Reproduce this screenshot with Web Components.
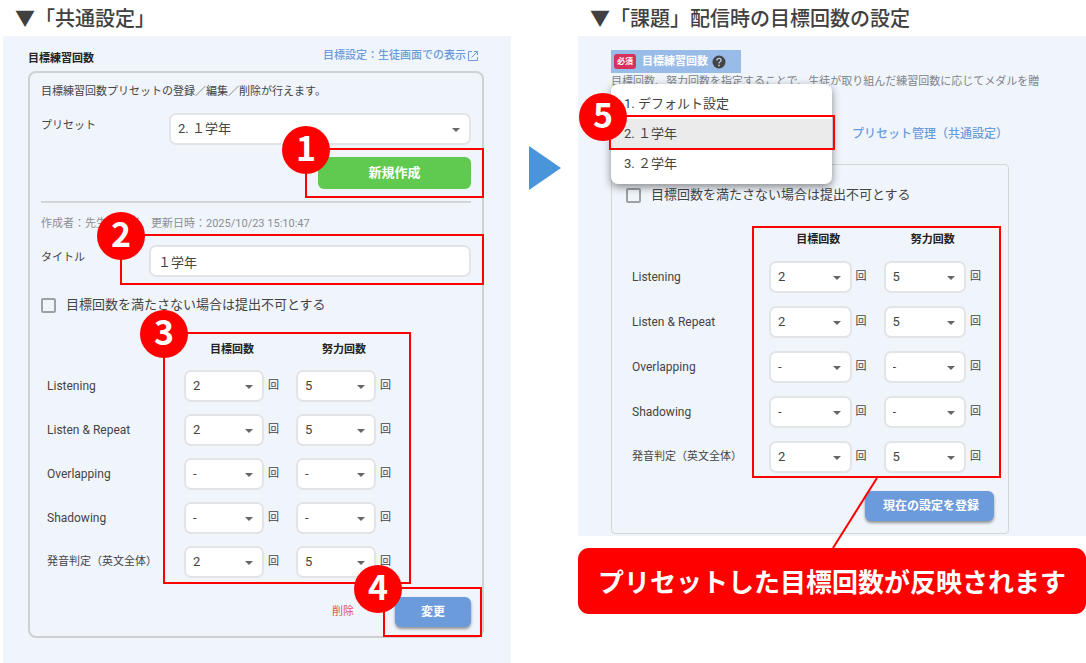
<!DOCTYPE html>
<html lang="ja">
<head>
<meta charset="utf-8">
<title>目標回数の設定</title>
<style>
  body {
    margin: 0;
    background: #fff;
    color: #444;
    font-family: Roboto, "Noto Sans CJK JP", sans-serif;
    font-size: 11px;
    line-height: 16px;
  }
  main {
    display: grid;
    grid-template-columns: minmax(0, 1fr) 67px minmax(0, 1fr);
    padding-left: 3px;
  }
</style>
</head>
<body>
<main>
  <guide-column heading="▼「共通設定」">
    <common-settings></common-settings>
  </guide-column>
  <step-arrow></step-arrow>
  <guide-column heading="▼「課題」配信時の目標回数の設定">
    <task-settings></task-settings>
    <call-out slot="after">プリセットした目標回数が反映されます</call-out>
  </guide-column>
</main>

<script>
// heading above a pale blue panel
class GuideColumn extends HTMLElement {
  connectedCallback() {
    this.attachShadow({ mode: "open" });
    this.shadowRoot.innerHTML = `
      <style>
        :host { display: block; min-width: 0; }
        h1 {
          margin: 0;
          padding: 0 12px;
          font: 500 20px/36px "Noto Sans CJK JP", sans-serif;
          color: #404040;
          white-space: nowrap;
        }
        section { background: #f0f5fc; }
      </style>
      <h1>${this.getAttribute("heading")}</h1>
      <section><slot></slot></section>
      <slot name="after"></slot>
    `;
  }
}
customElements.define("guide-column", GuideColumn);

class StepArrow extends HTMLElement {
  connectedCallback() {
    this.attachShadow({ mode: "open" });
    this.shadowRoot.innerHTML = `
      <style>
        :host { display: flex; justify-content: center; padding-top: 146px; }
        svg { display: block; }
      </style>
      <svg width="32" height="44" viewBox="0 0 32 44" aria-hidden="true">
        <path d="M0 0L32 22L0 44Z" fill="#4a95da"/>
      </svg>
    `;
  }
}
customElements.define("step-arrow", StepArrow);

// red frame laid over its content, with an optional step number
class MarkFrame extends HTMLElement {
  connectedCallback() {
    const num = this.getAttribute("num");
    this.attachShadow({ mode: "open" });
    this.shadowRoot.innerHTML = `
      <style>
        :host { display: block; position: relative; }
        .frame {
          position: absolute;
          inset: var(--inset, -9px -13px);
          border: 2px solid #fe0000;
          pointer-events: none;
          z-index: 5;
        }
        .num {
          position: absolute;
          left: var(--num-x, 0);
          top: 0;
          width: 48px;
          height: 48px;
          margin: -24px -25px;
          border-radius: 50%;
          background: #fe0000;
          color: #fff;
          font: 700 34px/42px "Noto Sans CJK JP", sans-serif;
          text-align: center;
        }
      </style>
      <slot></slot>
      <div class="frame">${num ? `<span class="num">${num}</span>` : ""}</div>
    `;
  }
}
customElements.define("mark-frame", MarkFrame);

class SelectBox extends HTMLElement {
  connectedCallback() {
    const value = this.getAttribute("value");
    const options = (this.getAttribute("options") || value).split("|");
    this.attachShadow({ mode: "open" });
    this.shadowRoot.innerHTML = `
      <style>
        :host { display: block; position: relative; }
        select {
          display: block;
          width: 100%;
          height: 32px;
          box-sizing: border-box;
          padding: 0 24px 0 7px;
          border: 2px solid #e2e4e8;
          border-radius: 7px;
          background: #fff;
          color: #444;
          font: inherit;
          font-size: 13px;
          appearance: none;
        }
        svg { position: absolute; right: 11px; top: 15px; pointer-events: none; }
      </style>
      <select aria-label="${this.getAttribute("label")}">
        ${options.map(o => `<option${o === value ? " selected" : ""}>${o}</option>`).join("")}
      </select>
      <svg width="8" height="4" viewBox="0 0 8 4" aria-hidden="true"><path d="M0 0H8L4 4Z" fill="#666"/></svg>
    `;
  }
}
customElements.define("select-box", SelectBox);

class CheckLine extends HTMLElement {
  connectedCallback() {
    this.attachShadow({ mode: "open" });
    this.shadowRoot.innerHTML = `
      <style>
        :host { display: block; }
        label {
          display: flex;
          align-items: center;
          gap: 10px;
          font-size: 13px;
          line-height: 20px;
          white-space: nowrap;
        }
        input {
          width: 15px;
          height: 15px;
          margin: 0;
          box-sizing: border-box;
          border: 2px solid #9da0a5;
          border-radius: 2px;
          appearance: none;
        }
        input:checked { background: #6c9bdb; }
      </style>
      <label><input type="checkbox"><slot></slot></label>
    `;
  }
}
customElements.define("check-line", CheckLine);

class ActionButton extends HTMLElement {
  connectedCallback() {
    this.attachShadow({ mode: "open" });
    this.shadowRoot.innerHTML = `
      <style>
        :host { display: block; }
        button {
          display: block;
          width: 100%;
          height: 30px;
          padding: 0 18px;
          border: 0;
          border-radius: 6px;
          background: #6c9bdb;
          box-shadow: 0 2px 3px rgba(0, 0, 0, 0.4);
          color: #fff;
          font: inherit;
          font-size: 12px;
          font-weight: 700;
          white-space: nowrap;
        }
        :host([kind="create"]) button {
          height: 32px;
          background: #60ca50;
          box-shadow: none;
          font-size: 13px;
        }
        :host([kind="danger"]) button {
          padding: 0;
          background: none;
          box-shadow: none;
          color: #e5525a;
          font-size: 11px;
          font-weight: 400;
        }
      </style>
      <button type="button"><slot></slot></button>
    `;
  }
}
customElements.define("action-button", ActionButton);

class CountTable extends HTMLElement {
  connectedCallback() {
    const rows = [
      ["Listening", "2", "5"],
      ["Listen &amp; Repeat", "2", "5"],
      ["Overlapping", "-", "-"],
      ["Shadowing", "-", "-"],
      ["発音判定（英文全体）", "2", "5"],
    ];
    const cell = (name, value) => `
      <td><div class="count">
        <select-box label="${name}" value="${value}" options="-|1|2|3|4|5"></select-box>回
      </div></td>`;
    this.attachShadow({ mode: "open" });
    this.shadowRoot.innerHTML = `
      <style>
        :host { display: block; }
        table { border-collapse: collapse; table-layout: fixed; width: 100%; }
        col.name { width: var(--name-width, 143px); }
        th, td { padding: 0; }
        thead th {
          height: var(--head-height, 23px);
          padding-right: 16px;
          vertical-align: top;
          color: #222;
          font-weight: 700;
          line-height: 18px;
        }
        tbody tr { height: var(--row-height, 44px); }
        tbody th {
          padding-left: 6px;
          font-size: 12px;
          font-weight: 400;
          text-align: left;
          white-space: nowrap;
        }
        tbody tr:last-child th { font-size: 11px; }
        .count { display: flex; align-items: center; gap: 4px; padding-right: 17px; }
        select-box { flex: 1; }
      </style>
      <table>
        <colgroup><col class="name"><col><col></colgroup>
        <thead><tr><td></td><th>目標回数</th><th>努力回数</th></tr></thead>
        <tbody>
          ${rows.map(([name, goal, effort]) => `
            <tr><th scope="row">${name}</th>${cell(name + " 目標回数", goal)}${cell(name + " 努力回数", effort)}</tr>
          `).join("")}
        </tbody>
      </table>
    `;
  }
}
customElements.define("count-table", CountTable);

class CommonSettings extends HTMLElement {
  connectedCallback() {
    this.attachShadow({ mode: "open" });
    this.shadowRoot.innerHTML = `
      <style>
        :host { display: block; padding: 12px 27px 25px 25px; }
        header { display: flex; justify-content: space-between; padding: 0 6px 4px 0; }
        h2 { margin: 3px 0 0; font-size: 11px; line-height: 16px; color: #222; }
        a { display: flex; align-items: center; gap: 2px; height: 16px; color: #6c9bdb; font-weight: 500; text-decoration: none; }
        .card {
          padding: 10px 11px 9px;
          border: 2px solid #cdd0d5;
          border-radius: 8px;
        }
        p { margin: 0; line-height: 18px; white-space: nowrap; }
        .row { display: flex; justify-content: space-between; margin-top: 12px; }
        .row > label, .row > span { line-height: 26px; }
        .preset { width: 302px; }
        .create { width: 153px; margin: 12px 0 0 auto; }
        hr { margin: 12px 0; border: 0; border-top: 2px solid #d2d5da; }
        .meta { color: #8b8e93; }
        .title { width: 322px; --inset: -11px -13px -8px -29px; }
        input {
          display: block;
          width: 100%;
          height: 32px;
          box-sizing: border-box;
          padding: 0 7px;
          border: 2px solid #e2e4e8;
          border-radius: 7px;
          background: #fff;
          color: #444;
          font: inherit;
          font-size: 13px;
        }
        check-line { margin-top: 18px; }
        .counts { width: 367px; margin-top: 26px; --inset: -9px -3px 0 122px; }
        footer { display: flex; justify-content: flex-end; gap: 41px; margin-top: 13px; }
        .save { width: 76px; --inset: -10px -11px -10px -12px; --num-x: -6px; }
      </style>
      <header>
        <h2>目標練習回数</h2>
        <a href="#">目標設定：生徒画面での表示
          <svg width="10" height="10" viewBox="0 0 10 10" fill="none" stroke="#6c9bdb" aria-hidden="true">
            <path d="M4 .5H.5V9.5H9.5V6M6 .5H9.5V4M9.5 .5L3.5 6.5"/>
          </svg>
        </a>
      </header>
      <div class="card">
        <p>目標練習回数プリセットの登録／編集／削除が行えます。</p>
        <div class="row">
          <span>プリセット</span>
          <select-box class="preset" label="プリセット" value="2. １学年" options="1. デフォルト設定|2. １学年|3. ２学年"></select-box>
        </div>
        <mark-frame class="create" num="1"><action-button kind="create">新規作成</action-button></mark-frame>
        <hr>
        <p class="meta">作成者：先生管理者、更新日時：2025/10/23 15:10:47</p>
        <div class="row">
          <label for="title">タイトル</label>
          <mark-frame class="title" num="2"><input id="title" value="１学年"></mark-frame>
        </div>
        <check-line>目標回数を満たさない場合は提出不可とする</check-line>
        <mark-frame class="counts" num="3"><count-table></count-table></mark-frame>
        <footer>
          <action-button kind="danger">削除</action-button>
          <mark-frame class="save" num="4"><action-button>変更</action-button></mark-frame>
        </footer>
      </div>
    `;
  }
}
customElements.define("common-settings", CommonSettings);

// opened preset list, lies over the row it belongs to
class PresetMenu extends HTMLElement {
  connectedCallback() {
    this.attachShadow({ mode: "open" });
    this.shadowRoot.innerHTML = `
      <style>
        :host { display: block; position: relative; width: 221px; height: 32px; }
        .menu {
          position: absolute;
          left: 0;
          right: 0;
          top: -34px;
          padding: 5px 0;
          border-radius: 7px;
          background: #fff;
          box-shadow: 0 3px 8px rgba(0, 0, 0, 0.45);
          z-index: 4;
        }
        button {
          display: block;
          width: 100%;
          height: 30px;
          padding: 0 13px;
          border: 0;
          background: none;
          color: #444;
          font: inherit;
          font-size: 13px;
          text-align: left;
        }
        button[aria-selected="true"] { background: #ebebeb; }
        mark-frame { --inset: -4px -3px -1px -2px; --num-x: -7px; }
      </style>
      <div class="menu" role="listbox" aria-label="プリセット">
        <button type="button" role="option">1. デフォルト設定</button>
        <mark-frame num="5"><button type="button" role="option" aria-selected="true">2. １学年</button></mark-frame>
        <button type="button" role="option">3. ２学年</button>
      </div>
    `;
  }
}
customElements.define("preset-menu", PresetMenu);

class TaskSettings extends HTMLElement {
  connectedCallback() {
    this.attachShadow({ mode: "open" });
    this.shadowRoot.innerHTML = `
      <style>
        :host { display: block; padding: 14px 0 2px 33px; }
        header {
          display: flex;
          align-items: center;
          width: 127px;
          height: 23px;
          padding-left: 3px;
          background: #99bbe8;
          color: #fff;
        }
        .need {
          padding: 0 3px;
          margin-right: 6px;
          border-radius: 3px;
          background: #d8305c;
          font-size: 8px;
          font-weight: 700;
          line-height: 15px;
        }
        h2 { margin: 0 4px 0 0; font-size: 11px; line-height: 16px; }
        p { margin: 0; color: #808388; line-height: 18px; white-space: nowrap; }
        .bar { display: flex; align-items: center; gap: 20px; margin-top: 27px; }
        a { color: #6c9bdb; font-size: 12px; font-weight: 500; text-decoration: none; }
        .card {
          margin: 14px 77px 0 0;
          padding: 20px 14px 12px;
          border: 1px solid #d3d6db;
          border-radius: 4px;
        }
        .counts {
          width: 372px;
          margin: 26px -2px 0 0;
          --inset: -5px -3px 1px 126px;
          --name-width: 143px;
          --row-height: 45px;
        }
        .save { width: 129px; margin: 12px 0 0 auto; }
      </style>
      <header>
        <span class="need">必須</span>
        <h2>目標練習回数</h2>
        <svg width="14" height="14" viewBox="0 0 14 14" aria-hidden="true">
          <circle cx="7" cy="7" r="6.5" fill="#444"/>
          <path d="M4.9 5.4C4.9 2.7 9.1 2.7 9.1 5.3C9.1 6.8 7 6.9 7 8.4" fill="none" stroke="#b5cff0" stroke-width="1.3"/>
          <circle cx="7" cy="10.4" r=".9" fill="#b5cff0"/>
        </svg>
      </header>
      <p>目標回数、努力回数を指定することで、生徒が取り組んだ練習回数に応じてメダルを贈</p>
      <div class="bar">
        <preset-menu></preset-menu>
        <a href="#">プリセット管理（共通設定）</a>
      </div>
      <div class="card">
        <check-line>目標回数を満たさない場合は提出不可とする</check-line>
        <mark-frame class="counts"><count-table></count-table></mark-frame>
        <action-button class="save">現在の設定を登録</action-button>
      </div>
    `;
  }
}
customElements.define("task-settings", TaskSettings);

// red note with a line up to the framed counts
class CallOut extends HTMLElement {
  connectedCallback() {
    this.attachShadow({ mode: "open" });
    this.shadowRoot.innerHTML = `
      <style>
        :host {
          display: block;
          position: relative;
          margin-top: 12px;
          border-radius: 11px;
          background: #fe0000;
          color: #fff;
          font: 700 26px/66px "Noto Sans CJK JP", sans-serif;
          text-align: center;
          white-space: nowrap;
        }
        svg { position: absolute; left: 50%; bottom: 100%; z-index: 6; }
      </style>
      <svg width="46" height="70" viewBox="0 0 46 70" aria-hidden="true">
        <path d="M45 0L1 70" stroke="#fe0000" stroke-width="2"/>
      </svg>
      <slot></slot>
    `;
  }
}
customElements.define("call-out", CallOut);
</script>
</body>
</html>
